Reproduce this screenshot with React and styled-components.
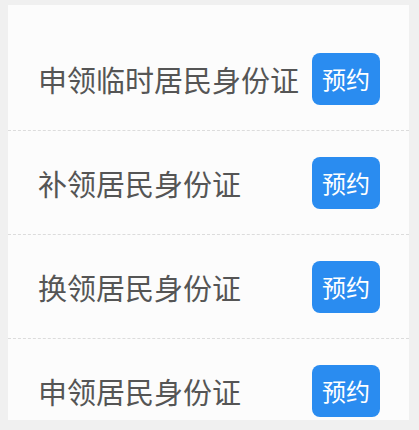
import React from 'react';
import styled, { createGlobalStyle } from 'styled-components';

const GlobalStyle = createGlobalStyle`
  html, body {
    margin: 0;
    padding: 0;
    background: #f0f0f0;
  }
  body {
    font-family: "Noto Sans CJK SC", "Noto Sans", sans-serif;
  }
`;

const Page = styled.div`
  padding: 5px 10px 0 8px;
  height: 430px;
  box-sizing: border-box;
  overflow: hidden;
`;

const Card = styled.div`
  background: #fcfcfc;
  height: 415px;
  overflow: hidden;
  padding-top: 22px;
  box-sizing: border-box;
`;

const Row = styled.div`
  display: flex;
  align-items: center;
  justify-content: space-between;
  height: 104px;
  box-sizing: border-box;
  padding: 0 29px 0 30px;
  border-bottom: 1px dashed #dcdcdc;
`;

const Title = styled.span`
  font-size: 29px;
  color: #555;
  letter-spacing: 0;
  white-space: nowrap;
`;

const BookButton = styled.button`
  width: 68px;
  height: 52px;
  border: none;
  border-radius: 8px;
  background: #2a8cf0;
  color: #fff;
  font-family: inherit;
  font-size: 24px;
  padding: 0;
  flex-shrink: 0;
  cursor: pointer;
`;

const items = ['申领临时居民身份证', '补领居民身份证', '换领居民身份证', '申领居民身份证'];

export default function App() {
  return (
    <Page>
      <GlobalStyle />
      <Card>
        {items.map((name) => (
          <Row key={name}>
            <Title>{name}</Title>
            <BookButton>预约</BookButton>
          </Row>
        ))}
      </Card>
    </Page>
  );
}
